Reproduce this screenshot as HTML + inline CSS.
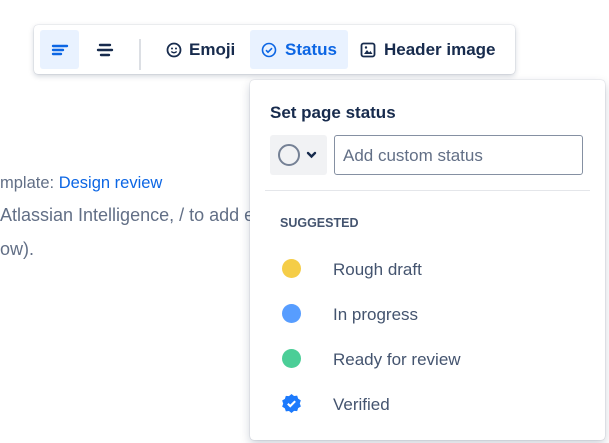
<!DOCTYPE html>
<html><head><style>
body{margin:0;width:609px;height:443px;background:#fff;position:relative;overflow:hidden;font-family:"Liberation Sans",sans-serif;color:#172b4d}
.a{position:absolute}
.tb{left:34px;top:25px;width:481px;height:49px;background:#fff;border-radius:4px;box-shadow:0 2px 6px rgba(9,30,66,.2),0 0 1px rgba(9,30,66,.3)}
.btn{position:absolute;top:5px;height:39px;border-radius:3px;display:flex;align-items:center;font-size:17px;font-weight:bold;color:#172b4d;padding-top:1px;box-sizing:border-box}
.sel{background:#e9f2ff;color:#0c66e4}
.txt{font-size:17px;color:#626f86;white-space:nowrap}
.pop{left:250px;top:80px;width:355px;height:360px;background:#fff;border-radius:4px;box-shadow:0 4px 10px rgba(9,30,66,.2),0 0 1px rgba(9,30,66,.35)}
.it{position:absolute;left:0;font-size:17px;color:#44546f}
.dot{position:absolute;left:32px;width:19px;height:19px;border-radius:50%}
</style></head><body>
<div class="a txt" style="left:0;top:174px;font-size:16.5px">mplate: <span style="color:#0c66e4">Design review</span></div>
<div class="a txt" style="left:0;top:205px;font-size:18px">Atlassian Intelligence, / to add elements, &nbsp;/</div>
<div class="a txt" style="left:0;top:239px;font-size:18px">ow).</div>
<div class="a tb">
 <div class="btn sel" style="left:6px;width:39px;justify-content:center"><svg width="18" height="14"><path d="M2 3h14M2 7h10M2 11h8" stroke="#0c66e4" stroke-width="2.4" stroke-linecap="round"/></svg></div>
 <div class="btn" style="left:51px;width:39px;justify-content:center"><svg width="18" height="14"><path d="M4 2h10M2 7h14M5 12h8" stroke="#172b4d" stroke-width="2.4" stroke-linecap="round"/></svg></div>
 <div class="a" style="left:105px;top:14px;width:2px;height:31px;background:#dcdfe4"></div>
 <div class="btn" style="left:127px;width:85px;padding-left:5px"><svg width="16" height="16"><circle cx="8" cy="8" r="6.5" fill="none" stroke="#172b4d" stroke-width="1.8"/><circle cx="6" cy="6.5" r="1" fill="#172b4d"/><circle cx="10" cy="6.5" r="1" fill="#172b4d"/><path d="M5.3 9.5q2.7 2.5 5.4 0" stroke="#172b4d" stroke-width="1.5" fill="none"/></svg><span style="margin-left:7px">Emoji</span></div>
 <div class="btn sel" style="left:216px;width:98px;padding-left:11px"><svg width="16" height="16"><circle cx="8" cy="8" r="6.5" fill="none" stroke="#0c66e4" stroke-width="1.6"/><path d="M5 8.2l2 2 4-4" stroke="#0c66e4" stroke-width="1.6" fill="none"/></svg><span style="margin-left:8px">Status</span></div>
 <div class="btn" style="left:318px;width:155px;padding-left:8px"><svg width="16" height="16"><rect x="1.5" y="1.5" width="13" height="13" rx="2" fill="none" stroke="#172b4d" stroke-width="1.8"/><path d="M4 12l3-4 2 2.5 1.5-1.5 2 3z" fill="#172b4d"/><circle cx="6" cy="5.5" r="1.2" fill="#172b4d"/></svg><span style="margin-left:8px">Header image</span></div>
</div>
<div class="a pop">
 <div class="a" style="left:20px;top:23px;font-size:17px;font-weight:bold;color:#172b4d">Set page status</div>
 <div class="a" style="left:20px;top:55px;width:57px;height:40px;background:#f1f2f4;border-radius:3px"><svg class="a" style="left:7px;top:8px" width="44" height="24"><circle cx="12" cy="12" r="10" fill="none" stroke="#758195" stroke-width="2"/><path d="M31 10l3.5 3.5 3.5-3.5" stroke="#172b4d" stroke-width="2.4" fill="none" stroke-linecap="round"/></svg></div>
 <div class="a" style="left:84px;top:55px;width:247px;height:38px;border:1px solid #8590a2;border-radius:3px"><span class="a" style="left:8px;top:10px;font-size:17px;color:#626f86">Add custom status</span></div>
 <div class="a" style="left:15px;top:110px;width:325px;height:1px;background:#e4e6ea"></div>
 <div class="a" style="left:30px;top:136px;font-size:12.5px;font-weight:bold;color:#44546f">SUGGESTED</div>
 <div class="dot" style="top:179px;background:#f5cd47"></div><div class="it" style="left:83px;top:180px">Rough draft</div>
 <div class="dot" style="top:224px;background:#579dff"></div><div class="it" style="left:83px;top:225px">In progress</div>
 <div class="dot" style="top:269px;background:#4bce97"></div><div class="it" style="left:83px;top:270px">Ready for review</div>
 <svg class="a" style="left:31px;top:313px" width="21" height="21" viewBox="0 0 20 20"><path d="M10 1l2.4 1.8 3-.3.9 2.9 2.6 1.6-1 2.9 1 2.9-2.6 1.6-.9 2.9-3-.3L10 19l-2.4-1.8-3 .3-.9-2.9L1.1 13l1-2.9-1-2.9 2.6-1.6.9-2.9 3 .3z" fill="#1d7afc"/><path d="M6.5 10.2l2.3 2.3 4.7-4.7" stroke="#fff" stroke-width="2" fill="none"/></svg>
 <div class="it" style="left:83px;top:315px">Verified</div>
</div>
</body></html>
